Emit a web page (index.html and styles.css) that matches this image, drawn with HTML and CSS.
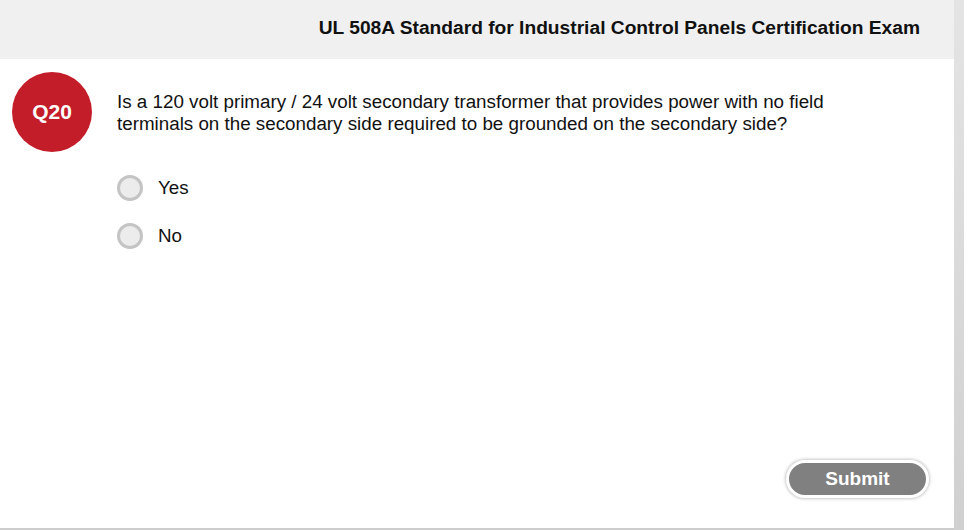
FILE: index.html
```html
<!doctype html>
<html>
  <head>
    <title>UL 508A Exam</title>
    <link rel="stylesheet" href="styles.css">
  </head>
  <body>
    <div class="page">
      <div class="header">
        <h1>UL 508A Standard for Industrial Control Panels Certification Exam</h1>
      </div>

      <div class="question">
        <div class="badge">Q20</div>
        <div class="question-body">
          <p class="question-text">
            Is a 120 volt primary / 24 volt secondary transformer that provides power with no field
            terminals on the secondary side required to be grounded on the secondary side?
          </p>
          <label class="option">
            <input type="radio" name="answer" value="yes" />
            <span class="radio"></span>
            <span class="option-label">Yes</span>
          </label>
          <label class="option">
            <input type="radio" name="answer" value="no" />
            <span class="radio"></span>
            <span class="option-label">No</span>
          </label>
        </div>
      </div>

      <div class="footer">
        <button class="submit-btn">Submit</button>
      </div>
    </div>
    <div class="rail"></div>
  </body>
</html>
```

FILE: styles.css
```css
html,
body {
  margin: 0;
  height: 530px;
  background-color: white;
}
body {
  display: flex;
  font-family: "Liberation Sans", Arial, Helvetica, sans-serif;
  color: #111;
  overflow: hidden;
}
.page {
  width: 954px;
  height: 530px;
  box-sizing: border-box;
  border-bottom: 2px solid #cdcdcd;
  display: flex;
  flex-direction: column;
}
.rail {
  width: 10px;
  height: 530px;
  background: linear-gradient(#e4e4e4, #d0d0d0);
}
.header {
  height: 59px;
  box-sizing: border-box;
  padding-bottom: 3px;
  background-color: #f0f0f0;
  display: flex;
  align-items: center;
  justify-content: flex-end;
  padding-right: 34px;
}
.header h1 {
  margin: 0;
  font-size: 19.2px;
  font-weight: bold;
  color: #111;
}
.question {
  display: flex;
  padding: 13px 0 0 12px;
}
.badge {
  width: 80px;
  height: 80px;
  border-radius: 50%;
  background-color: #c41d2a;
  color: white;
  font-weight: bold;
  font-size: 21px;
  display: flex;
  align-items: center;
  justify-content: center;
  flex-shrink: 0;
}
.question-body {
  padding-left: 25px;
  padding-top: 19px;
}
.question-text {
  margin: 0 0 39px;
  width: 740px;
  font-size: 18.8px;
  line-height: 22px;
}
.option {
  display: flex;
  align-items: center;
  height: 28px;
  margin-bottom: 20px;
  cursor: pointer;
}
.option input {
  display: none;
}
.radio {
  width: 20px;
  height: 20px;
  border: 3px solid #c4c4c4;
  border-radius: 50%;
  background-color: #ececec;
  margin-right: 15px;
}
.option-label {
  font-size: 18.8px;
}
.footer {
  margin-top: auto;
  display: flex;
  justify-content: flex-end;
  padding: 0 25px 30px 0;
}
.submit-btn {
  width: 143px;
  height: 38px;
  border-radius: 19px;
  border: 3px solid white;
  background-color: #808080;
  color: white;
  font-family: "Liberation Sans", Arial, sans-serif;
  font-size: 19px;
  font-weight: bold;
  box-shadow: 0 0 3px 1px #c8c8c8;
  cursor: pointer;
}
```
